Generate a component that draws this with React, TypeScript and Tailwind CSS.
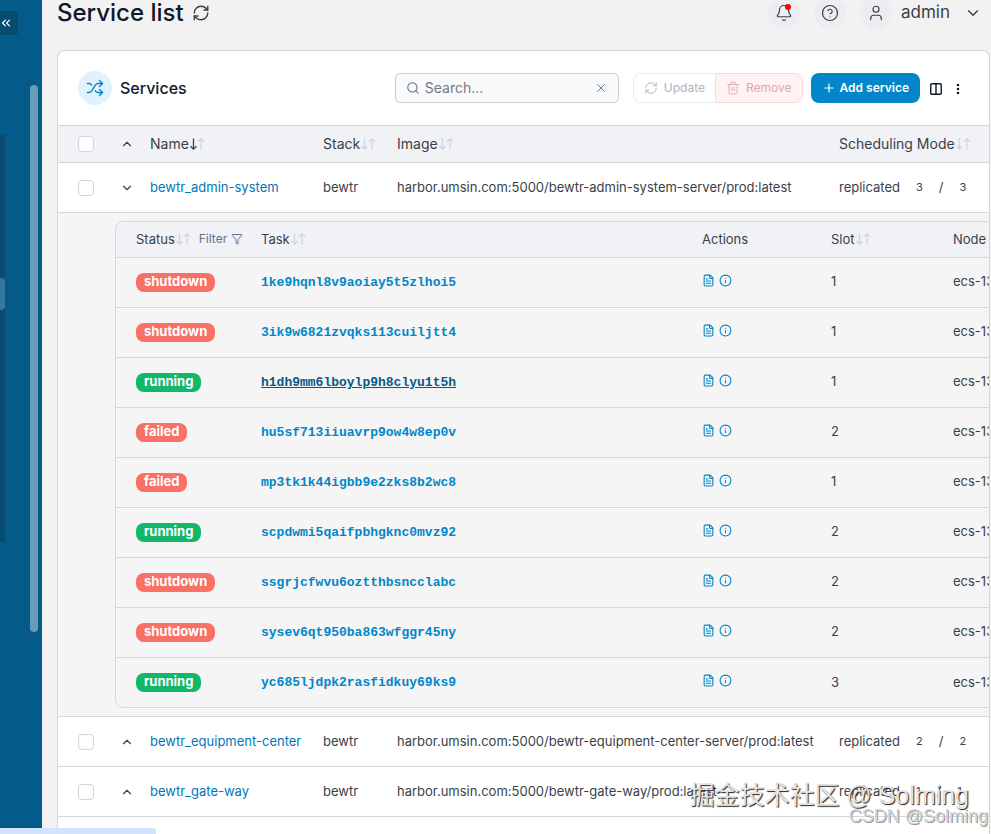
import React, { useState } from 'react';
import {
  Bell,
  ChevronDown,
  ChevronsLeft,
  ChevronUp,
  CircleHelp,
  Columns2,
  EllipsisVertical,
  FileText,
  Filter,
  Info,
  Plus,
  RefreshCw,
  Search,
  Shuffle,
  Trash2,
  User,
  X,
} from 'lucide-react';
import { clsx } from 'clsx';

type TaskStatus = 'shutdown' | 'running' | 'failed';

interface Task {
  id: string;
  status: TaskStatus;
  slot: number;
  active?: boolean;
}

interface Service {
  name: string;
  image: string;
  replicas: number;
  tasks?: Task[];
}

const TASKS: Task[] = [
  { id: '1ke9hqnl8v9aoiay5t5zlhoi5', status: 'shutdown', slot: 1 },
  { id: '3ik9w6821zvqks113cuiljtt4', status: 'shutdown', slot: 1 },
  { id: 'h1dh9mm6lboylp9h8clyu1t5h', status: 'running', slot: 1, active: true },
  { id: 'hu5sf713iiuavrp9ow4w8ep0v', status: 'failed', slot: 2 },
  { id: 'mp3tk1k44igbb9e2zks8b2wc8', status: 'failed', slot: 1 },
  { id: 'scpdwmi5qaifpbhgknc0mvz92', status: 'running', slot: 2 },
  { id: 'ssgrjcfwvu6oztthbsncclabc', status: 'shutdown', slot: 2 },
  { id: 'sysev6qt950ba863wfggr45ny', status: 'shutdown', slot: 2 },
  { id: 'yc685ljdpk2rasfidkuy69ks9', status: 'running', slot: 3 },
];

const SERVICES: Service[] = [
  { name: 'bewtr_admin-system', image: 'harbor.umsin.com:5000/bewtr-admin-system-server/prod:latest', replicas: 3, tasks: TASKS },
  { name: 'bewtr_equipment-center', image: 'harbor.umsin.com:5000/bewtr-equipment-center-server/prod:latest', replicas: 2 },
  { name: 'bewtr_gate-way', image: 'harbor.umsin.com:5000/bewtr-gate-way/prod:latest', replicas: 1 },
];

const SortArrows = ({ active = false }: { active?: boolean }) => (
  <svg viewBox="0 0 16 14" className="inline-block w-4 h-[14px] shrink-0" fill="none" strokeWidth="1.3">
    <path d="M4.5 1.5v10.5M1.5 9.2l3 3 3-3" stroke={active ? '#344054' : '#d0d5dd'} />
    <path d="M12 12.5V2M9 4.8l3-3 3 3" stroke="#d0d5dd" />
  </svg>
);

const Checkbox = ({ label }: { label: string }) => (
  <input
    type="checkbox"
    aria-label={label}
    className="block appearance-none w-4 h-4 rounded border border-[#d0d5dd] bg-white checked:bg-[#0086c9]"
  />
);

const StatusBadge = ({ status }: { status: TaskStatus }) => (
  <span
    className={clsx(
      'inline-flex items-center h-[19px] px-2 pb-px rounded-lg text-[13px] font-bold text-white',
      status === 'running' ? 'bg-[#12b76a]' : 'bg-[#f97066]'
    )}
  >
    {status}
  </span>
);

const Sidebar = () => (
  <aside className="relative w-[42px] shrink-0 bg-[#045a88]">
    <button
      aria-label="Collapse sidebar"
      className="mt-[11px] flex items-center justify-center w-[18px] h-6 pr-[6px] rounded-r bg-[#084b70] text-white"
    >
      <ChevronsLeft className="w-[14px] h-[14px] shrink-0" strokeWidth={2} />
    </button>
    <div className="absolute left-0 top-[135px] w-[5px] h-[407px] bg-[#084b70]" />
    <div className="absolute left-0 top-[278px] w-[5px] h-8 rounded-r bg-[#33799f]" />
    <div className="absolute right-1 top-[85px] w-2 h-[547px] rounded-full bg-[#6a9cb7]" />
  </aside>
);

const TopBar = () => (
  <header className="flex items-center h-[26px] text-[#3a3f47]">
    <h1 className="text-2xl font-medium text-[#101828]">Service list</h1>
    <button aria-label="Refresh" className="ml-2">
      <RefreshCw className="w-[18px] h-[18px]" strokeWidth={1.8} />
    </button>
    <div className="ml-auto mr-2 flex items-center gap-[14px]">
      <button aria-label="Notifications" className="relative flex items-center justify-center w-8 h-8 rounded-full bg-[#ebedf1]">
        <Bell className="w-[18px] h-[18px]" strokeWidth={1.6} />
        <span className="absolute right-[9px] top-[7px] w-[6px] h-[6px] rounded-full bg-[#ff0000]" />
      </button>
      <button aria-label="Help" className="flex items-center justify-center w-8 h-8 rounded-full bg-[#ebedf1]">
        <CircleHelp className="w-[18px] h-[18px]" strokeWidth={1.6} />
      </button>
      <button className="flex items-center text-[17px]">
        <span className="flex items-center justify-center w-8 h-8 mr-[9px] rounded-full bg-[#ebedf1]">
          <User className="w-[18px] h-[18px]" strokeWidth={1.6} />
        </span>
        admin
        <ChevronDown className="w-[18px] h-[18px] ml-[14px]" strokeWidth={1.8} />
      </button>
    </div>
  </header>
);

const Toolbar = () => (
  <div className="flex items-center h-[74px] pl-5 pr-6">
    <div className="flex items-center justify-center w-[34px] h-[34px] rounded-full bg-[#e0f2fe] text-[#0086c9]">
      <Shuffle className="w-[18px] h-[18px]" strokeWidth={1.8} />
    </div>
    <h2 className="ml-2 text-base font-medium text-[#101828]">Services</h2>
    <div className="ml-auto flex items-center w-56 h-[30px] px-[10px] rounded-[5px] border border-[#c8ccd3] bg-[#f9fafb] text-[#667085]">
      <Search className="w-[14px] h-[14px] shrink-0" strokeWidth={1.8} />
      <input
        type="text"
        aria-label="Search services"
        placeholder="Search..."
        className="min-w-0 flex-1 ml-[5px] bg-transparent text-sm outline-none placeholder:text-[#757b85]"
      />
      <button aria-label="Clear search">
        <X className="w-[14px] h-[14px]" strokeWidth={1.6} />
      </button>
    </div>
    <div className="ml-[14px] flex h-[30px] text-xs">
      <button disabled className="flex items-center gap-[6px] px-[10px] rounded-l-lg border border-r-0 border-[#eaecf0] text-[#b0b3b9]">
        <RefreshCw className="w-[14px] h-[14px]" strokeWidth={1.6} />
        Update
      </button>
      <button disabled className="flex items-center gap-[6px] px-[10px] rounded-r-lg border border-[#fbd9d6] bg-[#fef3f2] text-[#dba9a7]">
        <Trash2 className="w-[14px] h-[14px]" strokeWidth={1.6} />
        Remove
      </button>
    </div>
    <button className="ml-2 flex items-center gap-1 h-[30px] px-[11px] rounded-lg bg-[#0086c9] text-xs font-semibold text-white">
      <Plus className="w-[14px] h-[14px]" />
      Add service
    </button>
    <button aria-label="Columns" className="ml-[9px] mt-[2px]">
      <Columns2 className="w-[14px] h-[14px] text-[#101828]" strokeWidth={2.4} />
    </button>
    <button aria-label="Table settings" className="ml-2 mt-[2px]">
      <EllipsisVertical className="w-[14px] h-[14px] text-[#101828]" strokeWidth={2.4} />
    </button>
  </div>
);

const HEAD_CELL = 'p-0 text-left font-normal';

const TaskTable = ({ tasks }: { tasks: Task[] }) => (
  <div className="w-[1100px] rounded-lg border border-[#d3d6db] overflow-hidden bg-[#f5f5f5]">
    <table className="w-full table-fixed border-collapse">
      <colgroup>
        <col className="w-[145px]" />
        <col className="w-[441px]" />
        <col className="w-[129px]" />
        <col className="w-[122px]" />
        <col />
      </colgroup>
      <thead>
        <tr className="h-[35px] border-b border-[#d3d6db] bg-[#f0f2f5]">
          <th className={clsx(HEAD_CELL, 'pl-5')}>
            <div className="flex items-center whitespace-nowrap">
              Status
              <SortArrows />
              <button className="ml-2 flex items-center gap-1 text-xs text-[#667085]">
                Filter
                <Filter className="w-3 h-3" />
              </button>
            </div>
          </th>
          <th className={HEAD_CELL}>
            <div className="flex items-center">Task<SortArrows /></div>
          </th>
          <th className={HEAD_CELL}>Actions</th>
          <th className={HEAD_CELL}>
            <div className="flex items-center">Slot<SortArrows /></div>
          </th>
          <th className={HEAD_CELL}>Node</th>
        </tr>
      </thead>
      <tbody>
        {tasks.map((task) => (
          <tr key={task.id} className="h-[50px] border-b border-[#d3d6db] last:border-b-0">
            <td className="p-0 pl-5"><StatusBadge status={task.status} /></td>
            <td className="p-0">
              <a
                href="#"
                className={clsx(
                  'font-["Liberation_Mono",monospace] text-[13px] font-bold',
                  task.active ? 'text-[#065986] underline' : 'text-[#0086c9]'
                )}
              >
                {task.id}
              </a>
            </td>
            <td className="p-0">
              <div className="flex items-center gap-1 pb-1 text-[#0086c9]">
                <a href="#" aria-label="Logs"><FileText className="w-[13px] h-[13px]" /></a>
                <a href="#" aria-label="Inspect"><Info className="w-[13px] h-[13px]" /></a>
              </div>
            </td>
            <td className="p-0">{task.slot}</td>
            <td className="p-0">ecs-132741</td>
          </tr>
        ))}
      </tbody>
    </table>
  </div>
);

const ServiceRow = ({ service }: { service: Service }) => {
  const [open, setOpen] = useState(Boolean(service.tasks));
  const Chevron = open ? ChevronDown : ChevronUp;

  return (
    <>
      <tr className="h-[50px] border-b border-[#d3d6db]">
        <td className="p-0 pl-5"><Checkbox label={`Select ${service.name}`} /></td>
        <td className="p-0 pl-[10px]">
          <button className="block" aria-label="Toggle tasks" onClick={() => setOpen(!open)}>
            <Chevron className="w-[14px] h-[14px]" />
          </button>
        </td>
        <td className="p-0 pl-2"><a href="#" className="text-[#0077b8]">{service.name}</a></td>
        <td className="p-0 pl-2">bewtr</td>
        <td className="p-0 pl-2 whitespace-nowrap">{service.image}</td>
        <td className="p-0 pl-2">
          <div className="flex items-center">
            replicated
            <span className="ml-4 text-[11px]">{service.replicas}</span>
            <span className="ml-4">/</span>
            <span className="ml-4 text-[11px]">{service.replicas}</span>
          </div>
        </td>
      </tr>
      {open && service.tasks && (
        <tr className="border-b border-[#d3d6db] bg-[#f5f5f5]">
          <td colSpan={6} className="p-0">
            <div className="pl-[57px] py-2 overflow-hidden">
              <TaskTable tasks={service.tasks} />
            </div>
          </td>
        </tr>
      )}
    </>
  );
};

const ServicesTable = () => (
  <table className="w-full table-fixed border-collapse text-[13px] text-[#3a3f47]">
    <colgroup>
      <col className="w-[52px]" />
      <col className="w-8" />
      <col className="w-[173px]" />
      <col className="w-[74px]" />
      <col />
      <col className="w-[158px]" />
    </colgroup>
    <thead>
      <tr className="h-[37px] border-y border-[#d3d6db] bg-[#f0f2f5] text-sm">
        <th className={clsx(HEAD_CELL, 'pl-5')}><Checkbox label="Select all services" /></th>
        <th className={clsx(HEAD_CELL, 'pl-[10px]')}>
          <button className="block" aria-label="Toggle all"><ChevronUp className="w-[14px] h-[14px]" /></button>
        </th>
        <th className={clsx(HEAD_CELL, 'pl-2')}><div className="flex items-center">Name<SortArrows active /></div></th>
        <th className={clsx(HEAD_CELL, 'pl-2')}><div className="flex items-center">Stack<SortArrows /></div></th>
        <th className={clsx(HEAD_CELL, 'pl-2')}><div className="flex items-center">Image<SortArrows /></div></th>
        <th className={clsx(HEAD_CELL, 'pl-2')}>
          <div className="flex items-center whitespace-nowrap">Scheduling Mode<SortArrows /></div>
        </th>
      </tr>
    </thead>
    <tbody>
      {SERVICES.map((service) => <ServiceRow key={service.name} service={service} />)}
    </tbody>
  </table>
);

export default function App() {
  return (
    <div className="relative flex h-screen overflow-hidden bg-[#f2f2f2] font-['Inter',sans-serif] text-[#3a3f47]">
      <Sidebar />
      <main className="flex flex-col min-w-0 flex-1 pl-[15px] pr-px">
        <TopBar />
        <section className="mt-6 flex-1 rounded-t-lg border border-b-0 border-[#d3d6db] bg-white overflow-hidden">
          <Toolbar />
          <ServicesTable />
        </section>
      </main>

      <div className="absolute left-0 bottom-0 w-[156px] h-[6px] rounded-tr bg-[#d3e3fd]" />
      <div className="absolute right-[22px] bottom-[23px] text-[25px] leading-8 whitespace-nowrap font-['Liberation_Sans','Noto_Sans_CJK_SC',sans-serif] text-[#e4e4e4] [text-shadow:1px_1px_1px_#222]">
        掘金技术社区 @ Solming
      </div>
      <div className="absolute right-[3px] bottom-[6px] text-lg leading-6 whitespace-nowrap font-['Liberation_Sans',sans-serif] text-[#d6d6d6] [text-shadow:1px_1px_0_#999]">
        CSDN @Solming
      </div>
    </div>
  );
}
